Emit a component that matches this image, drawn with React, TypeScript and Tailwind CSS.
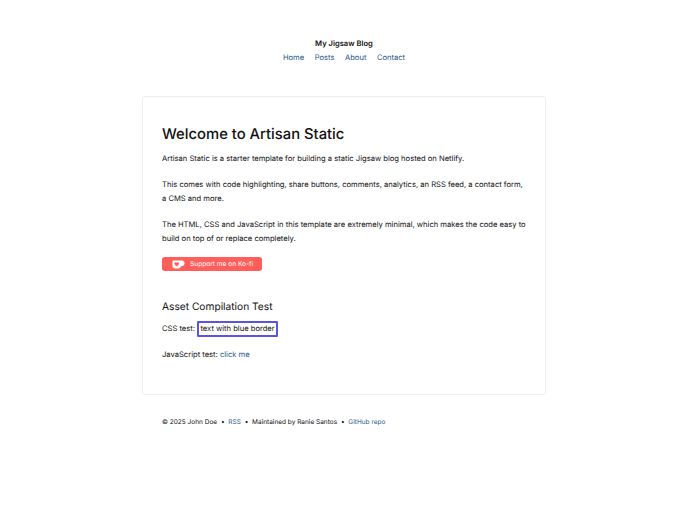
export default function App() {
  const link = "text-[#2b5a8c]"
  return (
    <div className="min-h-[512px] bg-white font-['Inter',sans-serif] [text-rendering:geometricPrecision] text-[7.6px] leading-[14px] text-[#111] flex flex-col items-center">
      <header className="pt-[38px] flex flex-col items-center">
        <h2 className="font-semibold text-[7.6px] leading-[12px]">My Jigsaw Blog</h2>
        <nav className="mt-[2px] flex gap-[10.5px] leading-[12px]">
          <a className={link}>Home</a>
          <a className={link}>Posts</a>
          <a className={link}>About</a>
          <a className={link}>Contact</a>
        </nav>
      </header>

      <main className="mt-[32px] w-[404px] h-[299px] border border-[#eceef0] rounded-[3px] pl-[19px] pr-[18px] pt-[27px]">
        <h1 className="text-[14.8px] leading-[20px] font-medium">Welcome to Artisan Static</h1>
        <p className="mt-[8px]">Artisan Static is a starter template for building a static Jigsaw blog hosted on Netlify.</p>
        <p className="mt-[12px]">This comes with code highlighting, share buttons, comments, analytics, an RSS feed, a contact form, a CMS and more.</p>
        <p className="mt-[12px]">The HTML, CSS and JavaScript in this template are extremely minimal, which makes the code easy to build on top of or replace completely.</p>
        <a className="mt-[11px] w-[100px] h-[14px] rounded-[3px] bg-[#ff5e5b] flex items-center gap-[5px] pl-[10px] text-white text-[6.6px]">
          <svg width="13" height="9" viewBox="0 0 13 9">
            <path d="M0.5 0.5h9.2a2.8 2.8 0 0 1 0 5.6h-0.7a2.4 2.4 0 0 1-2.4 2.4H3.2a2.7 2.7 0 0 1-2.7-2.7z" fill="#fff" />
            <path d="M4.7 6.6 2.5 4.3a1.3 1.3 0 0 1 2.2-1.5 1.3 1.3 0 0 1 2.2 1.5z" fill="#ff5e5b" />
          </svg>
          Support me on Ko-fi
        </a>
        <h3 className="mt-[28px] text-[10.2px] leading-[16px] font-normal">Asset Compilation Test</h3>
        <p className="mt-[6px] flex items-center h-[16px]">
          CSS test:
          <span className="ml-[2px] border-2 border-[#5b54e0] rounded-[1px] px-[1.5px] h-[16px] flex items-center">text with blue border</span>
        </p>
        <p className="mt-[11px]">
          JavaScript test: <a className={link}>click me</a>
        </p>
      </main>

      <footer className="mt-[21px] w-[404px] px-[20px] text-[6.5px] leading-[12px] flex gap-[3.8px] whitespace-pre">
        <span>© 2025 John Doe</span>
        <span>•</span>
        <a className={link}>RSS</a>
        <span>•</span>
        <span>Maintained by Ranie Santos</span>
        <span>•</span>
        <a className={link}>GitHub repo</a>
      </footer>
    </div>
  )
}
